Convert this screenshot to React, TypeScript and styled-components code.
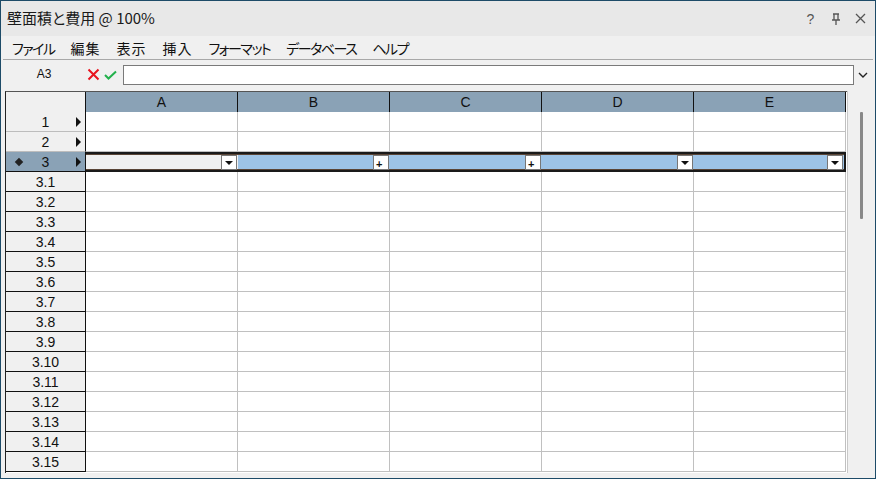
import styled, { createGlobalStyle, css } from 'styled-components';

const GlobalStyle = createGlobalStyle`
  html, body {
    margin: 0;
    padding: 0;
    background: #f0f0f0;
  }
  * {
    box-sizing: border-box;
  }
`;

const COLS = ['A', 'B', 'C', 'D', 'E'];
const ROWS = [
  '1', '2', '3', '3.1', '3.2', '3.3', '3.4', '3.5', '3.6', '3.7', '3.8',
  '3.9', '3.10', '3.11', '3.12', '3.13', '3.14', '3.15',
];
const MENUS = [
  { label: 'ファイル', kana: true },
  { label: '編集', kana: false },
  { label: '表示', kana: false },
  { label: '挿入', kana: false },
  { label: 'フォーマット', kana: true },
  { label: 'データベース', kana: true },
  { label: 'ヘルプ', kana: true },
];

const Window = styled.div`
  width: 876px;
  height: 479px;
  border: 1px solid #1d4b68;
  background: #f0f0f0;
  display: flex;
  flex-direction: column;
  overflow: hidden;
  font-family: 'Noto Sans CJK JP', 'Noto Sans', sans-serif;
`;

const TitleBar = styled.div`
  height: 35px;
  flex: none;
  background: #e8e8e8;
  display: flex;
  align-items: center;
  padding: 0 0 0 6px;
`;

const Title = styled.div`
  flex: 1;
  font-size: 15px;
  color: #1a1a1a;
  padding-bottom: 2px;
  font-feature-settings: 'palt';
`;

const TitleButtons = styled.div`
  display: flex;
  align-items: center;
  padding-right: 2px;
`;

const TitleButton = styled.div`
  width: 25px;
  height: 20px;
  display: flex;
  align-items: center;
  justify-content: center;
  color: #555;
  font-family: 'Liberation Sans', sans-serif;
  font-size: 14px;
`;

const MenuBar = styled.div`
  height: 24px;
  flex: none;
  display: flex;
  align-items: center;
  padding-left: 1px;
  border-bottom: 1px solid #a8a8a8;
  margin: 0 2px;
`;

const MenuItem = styled.div<{ $kana?: boolean }>`
  font-size: 14px;
  color: #111;
  padding: 0 8px;
  line-height: 22px;
  font-feature-settings: 'palt';
  letter-spacing: ${(p) => (p.$kana ? '-1.5px' : '1px')};
`;

const FormulaBar = styled.div`
  height: 29px;
  flex: none;
  display: flex;
  align-items: center;
  padding: 0 4px 0 0;
`;

const CellName = styled.div`
  width: 86px;
  text-align: center;
  font-family: 'Liberation Sans', sans-serif;
  font-size: 12px;
  color: #111;
  padding-bottom: 2px;
`;

const Icons = styled.div`
  display: flex;
  align-items: center;
  gap: 4px;
  width: 36px;
`;

const FormulaInput = styled.div`
  flex: 1;
  height: 20px;
  background: #fff;
  border: 1px solid #7a7a7a;
`;

const Chevron = styled.div`
  width: 17px;
  display: flex;
  justify-content: center;
`;

const Body = styled.div`
  flex: 1;
  display: flex;
  padding: 2px 1px 5px 4px;
  min-height: 0;
`;

const Sheet = styled.div`
  width: 842px;
  border-left: 1px solid #222;
  border-top: 1px solid #555;
  overflow: hidden;
  display: flex;
  flex-direction: column;
  background: #fff;
`;

const Row = styled.div`
  display: grid;
  grid-template-columns: 80px repeat(5, 152px);
  height: 20px;
  flex: none;
`;

const Corner = styled.div`
  background: #f0f0f0;
  border-right: 1px solid #111;
`;

const ColHead = styled.div`
  background: #8aa2b6;
  border-right: 1px solid #111;
  display: flex;
  align-items: center;
  justify-content: center;
  font-family: 'Liberation Sans', sans-serif;
  font-size: 14px;
  color: #111;
`;

const RowHead = styled.div<{ $selected?: boolean; $dark?: boolean }>`
  position: relative;
  background: ${(p) => (p.$selected ? '#8aa2b6' : '#f0f0f0')};
  border-right: 1px solid #111;
  border-bottom: 1px solid ${(p) => (p.$dark ? '#111' : '#bdbdbd')};
  display: flex;
  align-items: center;
  justify-content: center;
  font-family: 'Liberation Sans', sans-serif;
  font-size: 14px;
  color: #111;
  padding-top: 1px;
`;

const Arrow = styled.span`
  position: absolute;
  right: 4px;
  top: 50%;
  margin-top: -5px;
  width: 0;
  height: 0;
  border-top: 5px solid transparent;
  border-bottom: 5px solid transparent;
  border-left: 5px solid #111;
`;

const Diamond = styled.span`
  position: absolute;
  left: 10px;
  top: 50%;
  margin-top: -3px;
  width: 6px;
  height: 6px;
  background: #222;
  transform: rotate(45deg);
`;

const selectedEdges = css`
  box-shadow: inset 0 2px 0 #1a1a1a, inset 0 3px 0 #5a4536, inset 0 -2px 0 #1a1a1a,
    inset 0 -3px 0 #5a4536;
`;

const Cell = styled.div<{ $selected?: boolean; $fill?: string; $last?: boolean }>`
  position: relative;
  background: ${(p) => p.$fill ?? '#fff'};
  border-right: 1px solid ${(p) => (p.$selected && p.$last ? '#1a1a1a' : '#c0c0c0')};
  border-bottom: 1px solid #c0c0c0;
  ${(p) => p.$selected && selectedEdges};
  ${(p) => p.$selected && 'border-bottom: none; border-right-width: 2px;'};
  ${(p) => p.$selected && !p.$last && 'border-right: none;'};
`;

const CellButton = styled.div`
  position: absolute;
  right: 1px;
  top: 3px;
  width: 16px;
  height: 15px;
  background: #fff;
  border: 1px solid #777;
  display: flex;
  align-items: center;
  justify-content: center;
`;

const DownTri = styled.span`
  width: 0;
  height: 0;
  border-left: 4px solid transparent;
  border-right: 4px solid transparent;
  border-top: 4px solid #111;
`;

const PlusBox = styled(CellButton)`
  align-items: flex-end;
  justify-content: flex-start;
  font-family: 'Liberation Sans', sans-serif;
  font-size: 11px;
  font-weight: bold;
  line-height: 10px;
  padding-left: 2px;
  color: #111;
`;

const Scrollbar = styled.div`
  flex: 1;
  border-left: 1px solid #c8c8c8;
  background: #f0f0f0;
  display: flex;
  justify-content: center;
  padding-top: 21px;
`;

const Thumb = styled.div`
  width: 3px;
  height: 107px;
  background: #888;
  border-radius: 1px;
`;

const DataCell = ({ col, selected }: { col: number; selected: boolean }) => {
  if (!selected) return <Cell />;
  const fill = col === 0 ? '#f0f0f0' : '#9dc3e6';
  const last = col === COLS.length - 1;
  return (
    <Cell $selected $fill={fill} $last={last}>
      {col === 1 || col === 2 ? (
        <PlusBox>+</PlusBox>
      ) : (
        <CellButton>
          <DownTri />
        </CellButton>
      )}
    </Cell>
  );
};

export default function App() {
  return (
    <>
      <GlobalStyle />
      <Window>
        <TitleBar>
          <Title>壁面積と費用 @ 100%</Title>
          <TitleButtons>
            <TitleButton>?</TitleButton>
            <TitleButton>
              <svg width="10" height="12" viewBox="0 0 10 12">
                <path d="M2 1h6M3 1v6M7 1v6M1 7h8M5 7v5" stroke="#555" strokeWidth="1.3" fill="none" />
              </svg>
            </TitleButton>
            <TitleButton>
              <svg width="11" height="11" viewBox="0 0 11 11">
                <path d="M1 1l9 9M10 1l-9 9" stroke="#555" strokeWidth="1.3" />
              </svg>
            </TitleButton>
          </TitleButtons>
        </TitleBar>
        <MenuBar>
          {MENUS.map((m) => (
            <MenuItem key={m.label} $kana={m.kana}>
              {m.label}
            </MenuItem>
          ))}
        </MenuBar>
        <FormulaBar>
          <CellName>A3</CellName>
          <Icons>
            <svg width="13" height="13" viewBox="0 0 13 13">
              <path d="M1.5 1.5l10 10M11.5 1.5l-10 10" stroke="#e8141e" strokeWidth="2" />
            </svg>
            <svg width="13" height="10" viewBox="0 0 13 10">
              <path d="M1 5l3.5 3.5L12 1.5" stroke="#22b14c" strokeWidth="2" fill="none" />
            </svg>
          </Icons>
          <FormulaInput />
          <Chevron>
            <svg width="10" height="6" viewBox="0 0 10 6">
              <path d="M1 1l4 4 4-4" stroke="#222" strokeWidth="1.4" fill="none" />
            </svg>
          </Chevron>
        </FormulaBar>
        <Body>
          <Sheet>
            <Row>
              <Corner />
              {COLS.map((c) => (
                <ColHead key={c}>{c}</ColHead>
              ))}
            </Row>
            {ROWS.map((r, i) => {
              const selected = r === '3';
              return (
                <Row key={r}>
                  <RowHead $selected={selected} $dark={i >= 2}>
                    {selected && <Diamond />}
                    {r}
                    {i < 3 && <Arrow />}
                  </RowHead>
                  {COLS.map((c, ci) => (
                    <DataCell key={c} col={ci} selected={selected} />
                  ))}
                </Row>
              );
            })}
          </Sheet>
          <Scrollbar>
            <Thumb />
          </Scrollbar>
        </Body>
      </Window>
    </>
  );
}
